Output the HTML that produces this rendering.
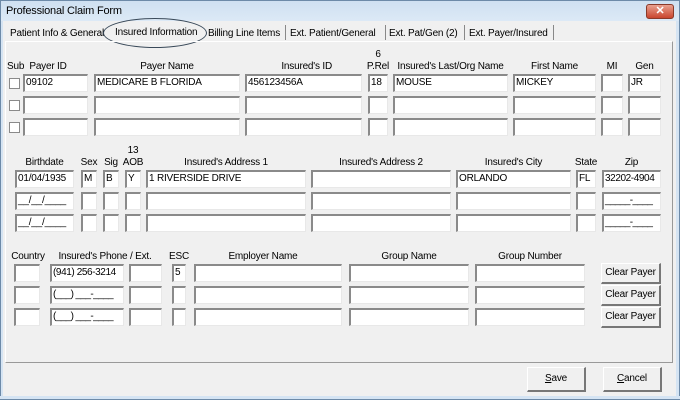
<!DOCTYPE html>
<html><head><style>
*{margin:0;padding:0;box-sizing:border-box}
body{width:680px;height:400px;overflow:hidden;background:#f0f0f0;font-family:"Liberation Sans",sans-serif;font-size:10px;letter-spacing:-0.2px;color:#000;position:relative}
.a{position:absolute;white-space:nowrap}
.i{position:absolute;height:18px;background:#fff;border-top:2px solid #8a8a8a;border-left:2px solid #8a8a8a;border-bottom:1px solid #e8e8e8;border-right:1px solid #e8e8e8;padding-left:1px;line-height:14px;white-space:nowrap;overflow:hidden}
.c{position:absolute;width:11px;height:11px;background:#fff;border:1px solid #8a8a8a}
.b{position:absolute;background:#f0f0f0;border:1px solid #fff;border-right:2px solid #777;border-bottom:2px solid #777;text-align:center;line-height:18px;white-space:nowrap}
.l{position:absolute;text-align:center;white-space:nowrap}
</style></head><body>
<div class="a" style="left:0;top:0;width:680px;height:21px;background:linear-gradient(#cfe0f1,#dce9f6);border:1px solid #6d8aa8;border-bottom:none"></div>
<div class="a" style="left:0;top:21px;width:3px;height:379px;background:#d5e4f3;border-left:1px solid #6d8aa8"></div>
<div class="a" style="left:676px;top:21px;width:4px;height:379px;background:#d5e4f3;border-right:1px solid #6d8aa8"></div>
<div class="a" style="left:0;top:396px;width:680px;height:4px;background:#d5e4f3;border-bottom:1px solid #6d8aa8"></div>
<div class="a" style="left:6px;top:5px;font-size:11px">Professional Claim Form</div>
<div class="a" style="left:646px;top:4px;width:28px;height:15px;background:linear-gradient(#e9a08f,#c9452e);border:1px solid #8a3a2a;border-radius:3px;color:#fff;font-weight:bold;text-align:center;line-height:13px;font-size:11px">✕</div>
<div class="a" style="left:3px;top:21px;width:673px;height:375px;background:#f0f0f0"></div>
<!-- tabs -->
<div class="a" style="left:10px;top:28px">Patient Info &amp; General</div>
<div class="a" style="left:115px;top:27px">Insured Information</div>
<div class="a" style="left:103px;top:18px;width:104px;height:30px;border:1.5px solid #3a4a5a;border-radius:50%"></div>
<div class="a" style="left:208px;top:28px">Billing Line Items</div>
<div class="a" style="left:285px;top:25px;height:15px;border-left:1px solid #888"></div>
<div class="a" style="left:290px;top:28px">Ext. Patient/General</div>
<div class="a" style="left:385px;top:25px;height:15px;border-left:1px solid #888"></div>
<div class="a" style="left:389px;top:28px">Ext. Pat/Gen (2)</div>
<div class="a" style="left:464px;top:25px;height:15px;border-left:1px solid #888"></div>
<div class="a" style="left:469px;top:28px">Ext. Payer/Insured</div>
<div class="a" style="left:553px;top:25px;height:15px;border-left:1px solid #888"></div>
<div class="a" style="left:5px;top:41px;width:668px;height:322px;border-top:1px solid #fff;border-left:1px solid #fff;border-right:1px solid #999;border-bottom:1px solid #999"></div>
<!-- sec1 labels -->
<div class="a" style="left:7px;top:61px">Sub</div>
<div class="l" style="left:23px;top:61px;width:50px">Payer ID</div>
<div class="l" style="left:94px;top:61px;width:146px">Payer Name</div>
<div class="l" style="left:245px;top:61px;width:117px;text-align:right;padding-right:30px">Insured's ID</div>
<div class="l" style="left:366px;top:49px;width:24px">6</div>
<div class="l" style="left:364px;top:61px;width:28px">P.Rel</div>
<div class="l" style="left:393px;top:61px;width:115px">Insured's Last/Org Name</div>
<div class="l" style="left:513px;top:61px;width:83px">First Name</div>
<div class="l" style="left:601px;top:61px;width:22px">MI</div>
<div class="l" style="left:628px;top:61px;width:33px">Gen</div>
<!-- sec1 rows -->
<div class="c" style="left:9px;top:78px"></div>
<div class="i" style="left:23px;top:74px;width:65px">09102</div>
<div class="i" style="left:94px;top:74px;width:146px">MEDICARE B FLORIDA</div>
<div class="i" style="left:245px;top:74px;width:117px">456123456A</div>
<div class="i" style="left:368px;top:74px;width:20px">18</div>
<div class="i" style="left:393px;top:74px;width:115px">MOUSE</div>
<div class="i" style="left:513px;top:74px;width:83px">MICKEY</div>
<div class="i" style="left:601px;top:74px;width:22px"></div>
<div class="i" style="left:628px;top:74px;width:33px">JR</div>

<div class="c" style="left:9px;top:100px"></div>
<div class="i" style="left:23px;top:96px;width:65px"></div>
<div class="i" style="left:94px;top:96px;width:146px"></div>
<div class="i" style="left:245px;top:96px;width:117px"></div>
<div class="i" style="left:368px;top:96px;width:20px"></div>
<div class="i" style="left:393px;top:96px;width:115px"></div>
<div class="i" style="left:513px;top:96px;width:83px"></div>
<div class="i" style="left:601px;top:96px;width:22px"></div>
<div class="i" style="left:628px;top:96px;width:33px"></div>

<div class="c" style="left:9px;top:122px"></div>
<div class="i" style="left:23px;top:118px;width:65px"></div>
<div class="i" style="left:94px;top:118px;width:146px"></div>
<div class="i" style="left:245px;top:118px;width:117px"></div>
<div class="i" style="left:368px;top:118px;width:20px"></div>
<div class="i" style="left:393px;top:118px;width:115px"></div>
<div class="i" style="left:513px;top:118px;width:83px"></div>
<div class="i" style="left:601px;top:118px;width:22px"></div>
<div class="i" style="left:628px;top:118px;width:33px"></div>
<!-- sec2 labels -->
<div class="l" style="left:15px;top:157px;width:59px">Birthdate</div>
<div class="l" style="left:79px;top:157px;width:20px">Sex</div>
<div class="l" style="left:101px;top:157px;width:20px">Sig</div>
<div class="l" style="left:123px;top:145px;width:20px">13</div>
<div class="l" style="left:121px;top:157px;width:24px">AOB</div>
<div class="l" style="left:146px;top:157px;width:160px">Insured's Address 1</div>
<div class="l" style="left:311px;top:157px;width:140px">Insured's Address 2</div>
<div class="l" style="left:456px;top:157px;width:115px">Insured's City</div>
<div class="l" style="left:574px;top:157px;width:24px">State</div>
<div class="l" style="left:602px;top:157px;width:59px">Zip</div>
<div class="i" style="left:15px;top:170px;width:59px">01/04/1935</div>
<div class="i" style="left:81px;top:170px;width:16px">M</div>
<div class="i" style="left:103px;top:170px;width:16px">B</div>
<div class="i" style="left:125px;top:170px;width:16px">Y</div>
<div class="i" style="left:146px;top:170px;width:160px">1 RIVERSIDE DRIVE</div>
<div class="i" style="left:311px;top:170px;width:140px"></div>
<div class="i" style="left:456px;top:170px;width:115px">ORLANDO</div>
<div class="i" style="left:576px;top:170px;width:20px">FL</div>
<div class="i" style="left:602px;top:170px;width:59px;letter-spacing:-0.4px">32202-4904</div>

<div class="i" style="left:15px;top:192px;width:59px">__/__/____</div>
<div class="i" style="left:81px;top:192px;width:16px"></div>
<div class="i" style="left:103px;top:192px;width:16px"></div>
<div class="i" style="left:125px;top:192px;width:16px"></div>
<div class="i" style="left:146px;top:192px;width:160px"></div>
<div class="i" style="left:311px;top:192px;width:140px"></div>
<div class="i" style="left:456px;top:192px;width:115px"></div>
<div class="i" style="left:576px;top:192px;width:20px"></div>
<div class="i" style="left:602px;top:192px;width:59px;letter-spacing:-0.6px">_____-____</div>

<div class="i" style="left:15px;top:214px;width:59px">__/__/____</div>
<div class="i" style="left:81px;top:214px;width:16px"></div>
<div class="i" style="left:103px;top:214px;width:16px"></div>
<div class="i" style="left:125px;top:214px;width:16px"></div>
<div class="i" style="left:146px;top:214px;width:160px"></div>
<div class="i" style="left:311px;top:214px;width:140px"></div>
<div class="i" style="left:456px;top:214px;width:115px"></div>
<div class="i" style="left:576px;top:214px;width:20px"></div>
<div class="i" style="left:602px;top:214px;width:59px;letter-spacing:-0.6px">_____-____</div>
<!-- sec3 -->
<div class="l" style="left:10px;top:251px;width:36px">Country</div>
<div class="l" style="left:50px;top:251px;width:110px">Insured's Phone / Ext.</div>
<div class="l" style="left:168px;top:251px;width:22px">ESC</div>
<div class="l" style="left:194px;top:251px;width:138px">Employer Name</div>
<div class="l" style="left:349px;top:251px;width:120px">Group Name</div>
<div class="l" style="left:475px;top:251px;width:110px">Group Number</div>

<div class="i" style="left:14px;top:264px;width:26px"></div>
<div class="i" style="left:50px;top:264px;width:74px;letter-spacing:-0.4px">(941) 256-3214</div>
<div class="i" style="left:129px;top:264px;width:33px"></div>
<div class="i" style="left:172px;top:264px;width:14px">5</div>
<div class="i" style="left:194px;top:264px;width:148px"></div>
<div class="i" style="left:349px;top:264px;width:120px"></div>
<div class="i" style="left:475px;top:264px;width:110px"></div>
<div class="b" style="left:601px;top:263px;width:60px;height:21px">Clear Payer</div>

<div class="i" style="left:14px;top:286px;width:26px"></div>
<div class="i" style="left:50px;top:286px;width:74px;letter-spacing:-0.6px">(___) ___-____</div>
<div class="i" style="left:129px;top:286px;width:33px"></div>
<div class="i" style="left:172px;top:286px;width:14px"></div>
<div class="i" style="left:194px;top:286px;width:148px"></div>
<div class="i" style="left:349px;top:286px;width:120px"></div>
<div class="i" style="left:475px;top:286px;width:110px"></div>
<div class="b" style="left:601px;top:285px;width:60px;height:21px">Clear Payer</div>

<div class="i" style="left:14px;top:308px;width:26px"></div>
<div class="i" style="left:50px;top:308px;width:74px;letter-spacing:-0.6px">(___) ___-____</div>
<div class="i" style="left:129px;top:308px;width:33px"></div>
<div class="i" style="left:172px;top:308px;width:14px"></div>
<div class="i" style="left:194px;top:308px;width:148px"></div>
<div class="i" style="left:349px;top:308px;width:120px"></div>
<div class="i" style="left:475px;top:308px;width:110px"></div>
<div class="b" style="left:601px;top:307px;width:60px;height:21px">Clear Payer</div>

<div class="b" style="left:527px;top:367px;width:59px;height:25px;line-height:22px"><u>S</u>ave</div>
<div class="b" style="left:603px;top:367px;width:59px;height:25px;line-height:22px"><u>C</u>ancel</div>
</body></html>
